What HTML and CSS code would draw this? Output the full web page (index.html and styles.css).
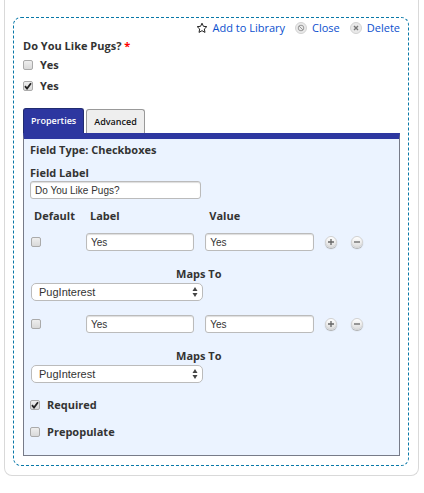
FILE: index.html
```html
<!DOCTYPE html>
<html lang="en">
<head>
    <meta charset="UTF-8">
    <meta name="viewport" content="width=device-width, initial-scale=1.0">
    <title>Form Builder</title>
    <link rel="stylesheet" href="styles.css">
</head>
<body>
    <div class="form-card">
        <div class="field">
            <div class="actions">
                <a href="#">
                    <svg class="star" width="12" height="12" viewBox="0 0 12 12"><path d="M6 1.2l1.4 3.1 3.4.4-2.5 2.3.7 3.4L6 8.7l-3 1.7.7-3.4L1.2 4.7l3.4-.4z" fill="#fff" stroke="#222" stroke-width="1"/></svg>
                    Add to Library
                </a>
                <a href="#">
                    <svg width="12" height="12" viewBox="0 0 12 12"><circle cx="6" cy="6" r="5.5" fill="#e9e9e9" stroke="#d2d2d2"/><circle cx="6" cy="6" r="2.8" fill="none" stroke="#999"/><path d="M4 4l4 4" stroke="#999"/></svg>
                    Close
                </a>
                <a href="#">
                    <svg width="12" height="12" viewBox="0 0 12 12"><circle cx="6" cy="6" r="5.5" fill="#e9e9e9" stroke="#d2d2d2"/><path d="M4 4l4 4M8 4l-4 4" stroke="#777" stroke-width="1.4"/></svg>
                    Delete
                </a>
            </div>

            <div class="title">Do You Like Pugs? <span class="star-required">*</span></div>
            <div class="option">
                <input type="checkbox" id="choice1">
                <label for="choice1">Yes</label>
            </div>
            <div class="option">
                <input type="checkbox" id="choice2" checked>
                <label for="choice2">Yes</label>
            </div>

            <div class="tabs">
                <button type="button" class="tab active">Properties</button>
                <button type="button" class="tab">Advanced</button>
            </div>

            <div class="panel">
                <div class="field-type">Field Type: Checkboxes</div>
                <label class="field-label" for="fieldLabel">Field Label</label>
                <input type="text" class="field-name" id="fieldLabel" value="Do You Like Pugs?">

                <table class="choices">
                    <thead>
                        <tr>
                            <th class="col-default">Default</th>
                            <th class="col-text">Label</th>
                            <th class="col-text">Value</th>
                            <td class="col-buttons"></td>
                        </tr>
                    </thead>
                    <tbody>
                        <tr class="choice">
                            <td><input type="checkbox" aria-label="Default"></td>
                            <td><input type="text" value="Yes" aria-label="Label"></td>
                            <td><input type="text" value="Yes" aria-label="Value"></td>
                            <td>
                                <div class="buttons">
                                    <button type="button" class="round" aria-label="Add"><svg width="8" height="8" viewBox="0 0 8 8"><path d="M1 4h6M4 1v6" stroke="#666" stroke-width="1.3"/></svg></button>
                                    <button type="button" class="round" aria-label="Remove"><svg width="8" height="8" viewBox="0 0 8 8"><path d="M1 4h6" stroke="#666" stroke-width="1.3"/></svg></button>
                                </div>
                            </td>
                        </tr>
                        <tr class="maps">
                            <td colspan="4">
                                <label for="map1">Maps To</label>
                                <div class="select">
                                    <select id="map1"><option>PugInterest</option></select>
                                    <svg width="6" height="10" viewBox="0 0 6 10"><path d="M3 0l2.5 4h-5zM3 10l2.5-4h-5z" fill="#444"/></svg>
                                </div>
                            </td>
                        </tr>
                        <tr class="choice">
                            <td><input type="checkbox" aria-label="Default"></td>
                            <td><input type="text" value="Yes" aria-label="Label"></td>
                            <td><input type="text" value="Yes" aria-label="Value"></td>
                            <td>
                                <div class="buttons">
                                    <button type="button" class="round" aria-label="Add"><svg width="8" height="8" viewBox="0 0 8 8"><path d="M1 4h6M4 1v6" stroke="#666" stroke-width="1.3"/></svg></button>
                                    <button type="button" class="round" aria-label="Remove"><svg width="8" height="8" viewBox="0 0 8 8"><path d="M1 4h6" stroke="#666" stroke-width="1.3"/></svg></button>
                                </div>
                            </td>
                        </tr>
                        <tr class="maps">
                            <td colspan="4">
                                <label for="map2">Maps To</label>
                                <div class="select">
                                    <select id="map2"><option>PugInterest</option></select>
                                    <svg width="6" height="10" viewBox="0 0 6 10"><path d="M3 0l2.5 4h-5zM3 10l2.5-4h-5z" fill="#444"/></svg>
                                </div>
                            </td>
                        </tr>
                    </tbody>
                </table>

                <div class="setting">
                    <input type="checkbox" id="required" checked>
                    <label for="required">Required</label>
                </div>
                <div class="setting">
                    <input type="checkbox" id="prepopulate">
                    <label for="prepopulate">Prepopulate</label>
                </div>
            </div>
        </div>
    </div>
</body>
</html>
```
FILE: styles.css
```css
* {
    box-sizing: border-box;
}
body {
    margin: 0;
    background: #fff;
    color: #333;
    font: 700 11px/16px "Open Sans", "Noto Sans", sans-serif;
}
.form-card {
    margin: 0 5px 16px 4px;
    padding: 17px 9px 9px 8px;
    border: 1px solid #d9d9d9;
    border-top: 0;
    border-radius: 0 0 8px 8px;
}
.field {
    padding: 2px 8px 9px 9px;
    border: 1px dashed #0878a8;
    border-radius: 8px;
}
.actions {
    display: flex;
    justify-content: flex-end;
    gap: 10px;
}
.actions a {
    display: flex;
    align-items: center;
    gap: 5px;
    color: #0b4fce;
    font-weight: 400;
    text-decoration: none;
}
.actions a:hover {
    text-decoration: underline;
}
.title {
    margin-top: 2px;
}
.star-required {
    color: #f00;
}
.option {
    display: flex;
    align-items: center;
    gap: 7px;
    height: 21px;
}
input[type="checkbox"] {
    appearance: none;
    display: block;
    flex: none;
    width: 10px;
    height: 10px;
    margin: 0;
    border: 1px solid #aaa;
    border-radius: 2px;
    background: linear-gradient(#eee, #d9d9d9);
}
input[type="checkbox"]:checked {
    background: url("data:image/svg+xml,%3Csvg xmlns='http://www.w3.org/2000/svg' viewBox='0 0 8 8'%3E%3Cpath d='M1 4.2l2 2.3L7 1.2' fill='none' stroke='%23222' stroke-width='1.8'/%3E%3C/svg%3E") center / 8px 8px, linear-gradient(#eee, #d9d9d9);
}
.tabs {
    display: flex;
    align-items: flex-end;
    gap: 2px;
    margin-top: 12px;
}
.tab {
    height: 24px;
    padding: 0 7px;
    border: 1px solid #999;
    border-bottom: 0;
    border-radius: 3px 3px 0 0;
    background: #eee;
    color: #111;
    font: 600 9px/16px "Open Sans", "Noto Sans", sans-serif;
    cursor: pointer;
}
.tab.active {
    height: 25px;
    border-color: #202b70;
    background: #2d37a0;
    color: #fff;
}
.panel {
    padding: 3px 6px 10px;
    border: 1px solid #777b88;
    border-top: 6px solid #2d37a0;
    background: #ebf3ff;
}
.field-label {
    display: block;
    margin-top: 7px;
}
input[type="text"] {
    display: block;
    width: 100%;
    height: 18px;
    margin: 0;
    padding: 0 4px;
    border: 1px solid #bbb;
    border-radius: 3px;
    background: #fff;
    box-shadow: inset 0 1px 1px #ddd;
    color: #333;
    font: 10px "Liberation Sans", Arial, sans-serif;
}
input.field-name {
    width: 47%;
}
.choices {
    width: 93%;
    margin-top: 6px;
    border-collapse: collapse;
    table-layout: fixed;
}
.choices td,
.choices th {
    padding: 0;
    text-align: left;
    font-weight: 700;
}
.choices th {
    height: 22px;
    padding-left: 4px;
}
.choices .col-default {
    width: 56px;
}
.choices .col-buttons {
    width: 43px;
}
.choice td {
    height: 30px;
}
.choice input[type="text"] {
    width: calc(100% - 11px);
}
.choice input[type="checkbox"] {
    margin-left: 1px;
}
.buttons {
    display: flex;
    gap: 14px;
}
.round {
    display: flex;
    flex: none;
    align-items: center;
    justify-content: center;
    width: 12px;
    height: 12px;
    padding: 0;
    border: 1px solid #d2d2d2;
    border-radius: 50%;
    background: linear-gradient(#fff, #ddd);
    box-shadow: 0 1px 1px #aaa;
    cursor: pointer;
}
.round svg {
    flex: none;
}
.maps td {
    height: 52px;
}
.maps label {
    display: block;
    text-align: center;
}
.select {
    display: grid;
    align-items: center;
    width: 51%;
    margin: 1px 0 0 1px;
}
.select select,
.select svg {
    grid-area: 1 / 1;
}
.select svg {
    justify-self: end;
    margin-right: 5px;
    pointer-events: none;
}
.select select {
    appearance: none;
    width: 100%;
    height: 18px;
    padding: 0 7px;
    border: 1px solid #bbb;
    border-radius: 5px;
    background: #fff;
    color: #333;
    font: 11px "Liberation Sans", Arial, sans-serif;
}
.setting {
    display: flex;
    align-items: center;
    gap: 7px;
    height: 27px;
}
```
